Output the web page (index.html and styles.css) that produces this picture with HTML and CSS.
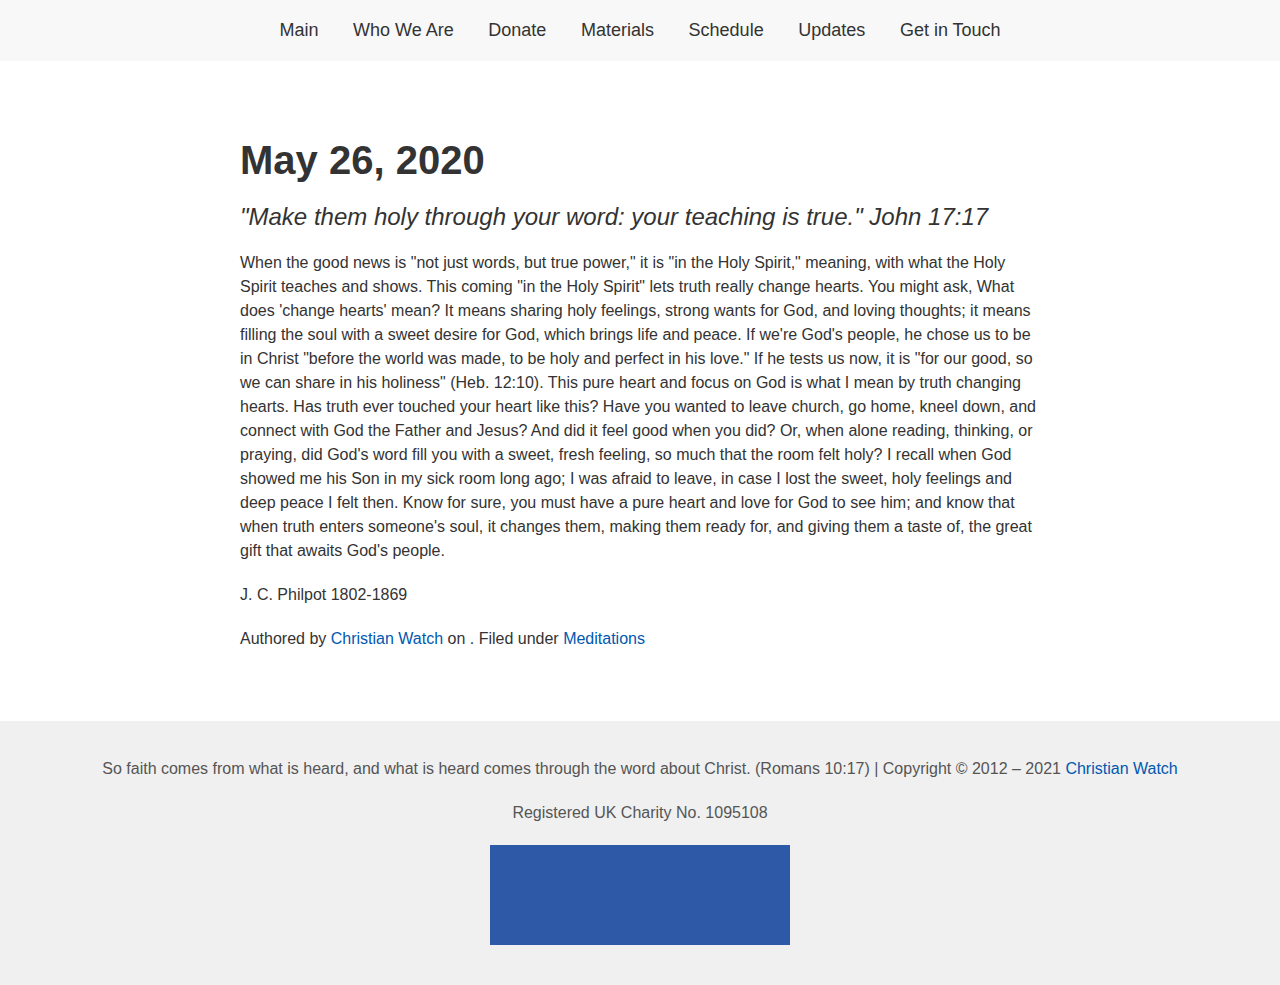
FILE: index.html
```html
<!DOCTYPE html>
<html lang="en">
<head>
<meta charset="utf-8">
<title>May 26, 2020</title>
<link rel="stylesheet" href="styles.css">
</head>
<body>
<header class="topbar">
  <nav class="nav">
    <a href="#">Main</a>
    <a href="#">Who We Are</a>
    <a href="#">Donate</a>
    <a href="#">Materials</a>
    <a href="#">Schedule</a>
    <a href="#">Updates</a>
    <a href="#">Get in Touch</a>
  </nav>
</header>
<main class="content">
  <article class="post">
    <h1 class="post-title">May 26, 2020</h1>
    <h2 class="post-verse">"Make them holy through your word: your teaching is true." John 17:17</h2>
    <p>When the good news is "not just words, but true power," it is "in the Holy Spirit," meaning, with what the Holy Spirit teaches and shows. This coming "in the Holy Spirit" lets truth really change hearts. You might ask, What does 'change hearts' mean? It means sharing holy feelings, strong wants for God, and loving thoughts; it means filling the soul with a sweet desire for God, which brings life and peace. If we're God's people, he chose us to be in Christ "before the world was made, to be holy and perfect in his love." If he tests us now, it is "for our good, so we can share in his holiness" (Heb. 12:10). This pure heart and focus on God is what I mean by truth changing hearts. Has truth ever touched your heart like this? Have you wanted to leave church, go home, kneel down, and connect with God the Father and Jesus? And did it feel good when you did? Or, when alone reading, thinking, or praying, did God's word fill you with a sweet, fresh feeling, so much that the room felt holy? I recall when God showed me his Son in my sick room long ago; I was afraid to leave, in case I lost the sweet, holy feelings and deep peace I felt then. Know for sure, you must have a pure heart and love for God to see him; and know that when truth enters someone's soul, it changes them, making them ready for, and giving them a taste of, the great gift that awaits God's people.</p>
    <p>J. C. Philpot 1802-1869</p>
    <p class="meta">Authored by <a href="#">Christian Watch</a> on . Filed under <a href="#">Meditations</a></p>
  </article>
</main>
<footer class="footer">
  <p>So faith comes from what is heard, and what is heard comes through the word about Christ. (Romans 10:17) | Copyright © 2012 – 2021 <a href="#">Christian Watch</a></p>
  <p>Registered UK Charity No. 1095108</p>
  <div class="footer-banner"></div>
</footer>
</body>
</html>
```

FILE: styles.css
```css
* {
  box-sizing: border-box;
}

html, body {
  margin: 0;
  padding: 0;
}

body {
  font-family: "Liberation Sans", Arial, sans-serif;
  font-size: 16px;
  line-height: 24px;
  color: #333333;
  background: #ffffff;
}

a {
  color: #0058b0;
  text-decoration: none;
}

.topbar {
  background: #f8f8f8;
  height: 61px;
}

.nav {
  display: flex;
  justify-content: center;
  align-items: flex-start;
  height: 61px;
  padding-top: 18px;
}

.nav a {
  color: #333333;
  font-size: 18px;
  line-height: 24px;
  padding: 0 17.3px;
}

.content {
  padding: 75px 0 70px;
}

.post {
  width: 800px;
  margin: 0 auto;
}

.post-title {
  font-size: 40px;
  line-height: 48px;
  font-weight: bold;
  margin: 0 0 18px;
  color: #333333;
}

.post-verse {
  font-size: 24px;
  line-height: 29px;
  font-style: italic;
  font-weight: normal;
  margin: 0 0 20px;
  color: #333333;
}

.post p {
  margin: 0 0 20px;
}

.post p.meta {
  margin-bottom: 0;
}

.footer {
  background: #f0f0f0;
  padding: 36px 0 40px;
  text-align: center;
  color: #555555;
}

.footer p {
  margin: 0 0 20px;
}

.footer-banner {
  width: 300px;
  height: 100px;
  margin: 0 auto;
  background: #2e59a7;
}
```
